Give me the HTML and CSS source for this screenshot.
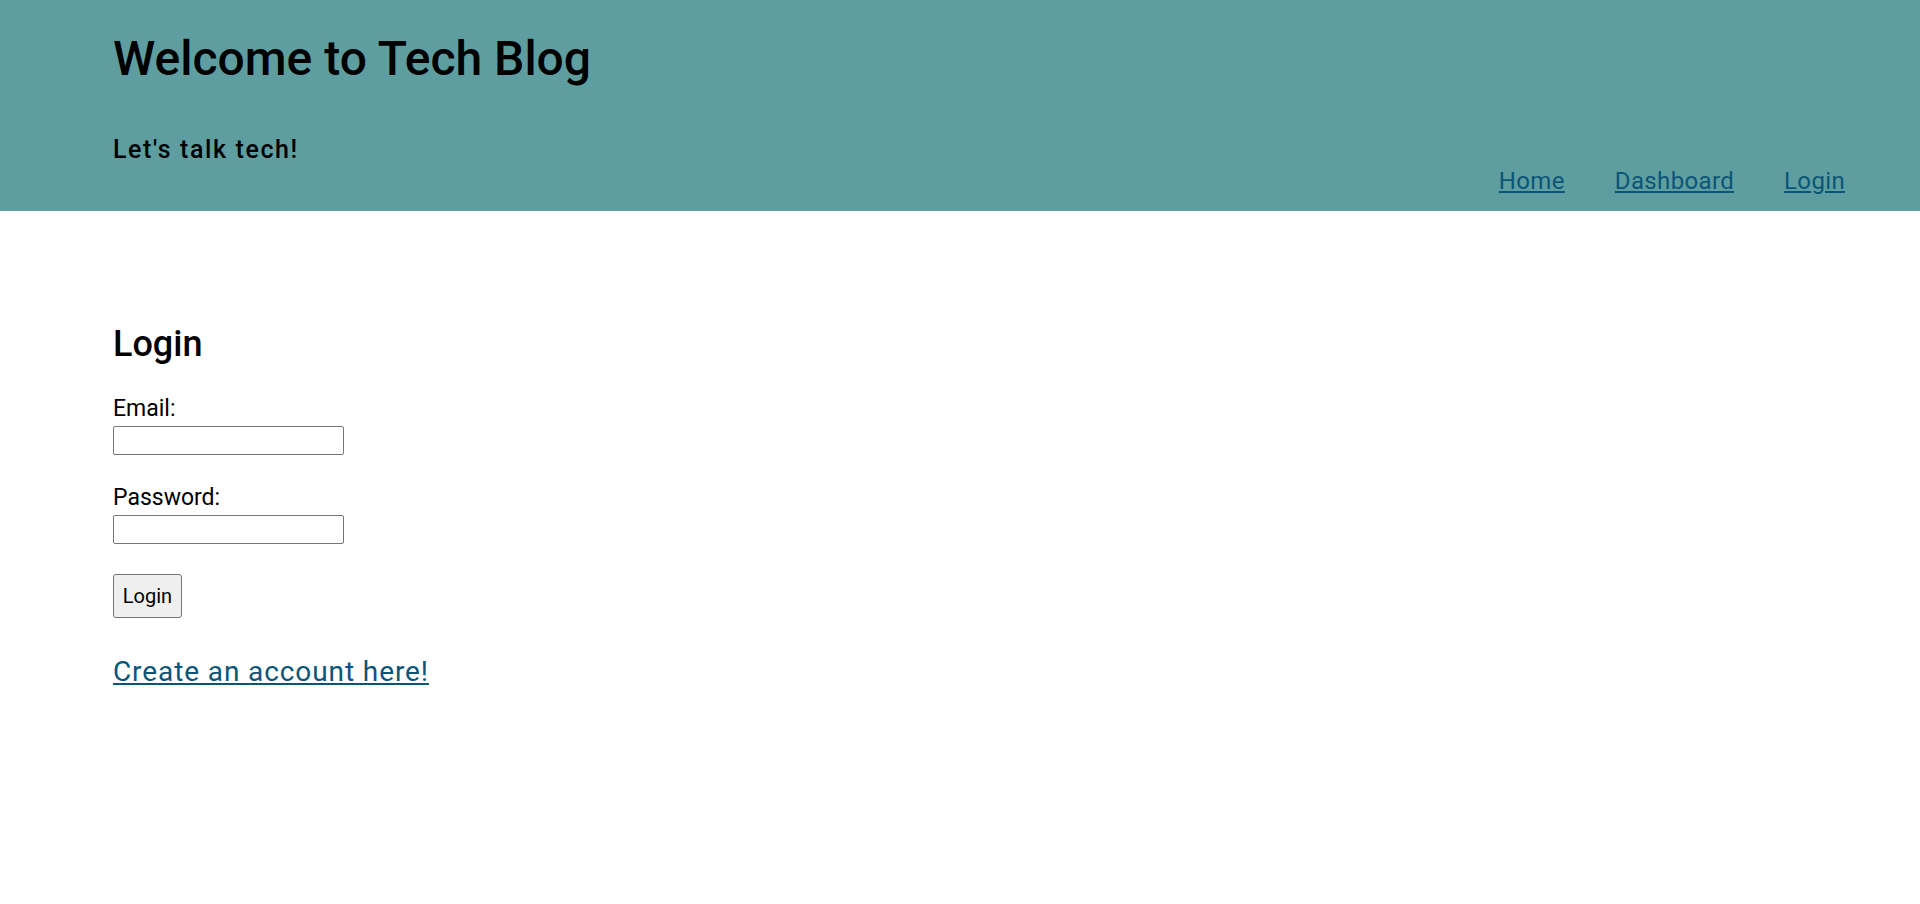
FILE: index.html
```html
<!DOCTYPE html>
<html lang="en">
<head>
<meta charset="utf-8">
<title>Tech Blog</title>
<link rel="stylesheet" href="styles.css">
</head>
<body>
<header class="site-header">
  <div class="brand">
    <h1 class="brand-title">Welcome to Tech Blog</h1>
    <p class="brand-tagline">Let's talk tech!</p>
  </div>
  <nav class="site-nav">
    <a href="#" class="nav-link">Home</a>
    <a href="#" class="nav-link">Dashboard</a>
    <a href="#" class="nav-link">Login</a>
  </nav>
</header>
<main class="content">
  <h2 class="form-title">Login</h2>
  <form class="login-form">
    <div class="field">
      <label class="field-label" for="email">Email:</label>
      <input class="field-input" id="email" type="email">
    </div>
    <div class="field">
      <label class="field-label" for="password">Password:</label>
      <input class="field-input" id="password" type="password">
    </div>
    <button class="btn" type="button">Login</button>
  </form>
  <a href="#" class="signup-link">Create an account here!</a>
</main>
</body>
</html>
```
FILE: styles.css
```css
* { box-sizing: border-box; }
html, body { margin: 0; padding: 0; }
body {
  font-family: Roboto, "Liberation Sans", sans-serif;
  color: #000;
  background: #fff;
}
.site-header {
  height: 211px;
  background: #5f9ea0;
  display: flex;
  justify-content: space-between;
  align-items: flex-end;
  padding: 0 75px 0 113px;
}
.brand { align-self: flex-start; }
.brand-title {
  margin: 31px 0 0;
  font-size: 48px;
  line-height: 56px;
  font-weight: 500;
}
.brand-tagline {
  margin: 48px 0 0;
  font-size: 25px;
  line-height: 30px;
  font-weight: 500;
  letter-spacing: 1.6px;
}
.site-nav {
  display: flex;
  gap: 50px;
  padding-bottom: 16px;
}
.nav-link {
  font-size: 24px;
  line-height: 28px;
  letter-spacing: 0.35px;
  color: #0b5577;
}
.content {
  padding: 0 113px;
}
.form-title {
  margin: 111px 0 0;
  font-size: 36px;
  line-height: 44px;
  font-weight: 500;
}
.login-form {
  display: flex;
  flex-direction: column;
  align-items: flex-start;
  margin-top: 28px;
}
.field {
  display: flex;
  flex-direction: column;
  align-items: flex-start;
  margin-bottom: 28px;
}
.field-label {
  font-size: 23px;
  line-height: 30px;
  margin-bottom: 2px;
}
.field-input {
  width: 231px;
  height: 29px;
  border: 1px solid #767676;
  border-radius: 2px;
  margin: 0;
}
.btn {
  margin-top: 2px;
  width: 69px;
  height: 44px;
  background: #efefef;
  border: 1px solid #767676;
  border-radius: 3px;
  font-family: inherit;
  font-size: 20px;
  color: #000;
  padding: 0;
}
.signup-link {
  display: inline-block;
  margin-top: 37px;
  font-size: 28px;
  line-height: 34px;
  letter-spacing: 0.9px;
  color: #0b5577;
}
```
